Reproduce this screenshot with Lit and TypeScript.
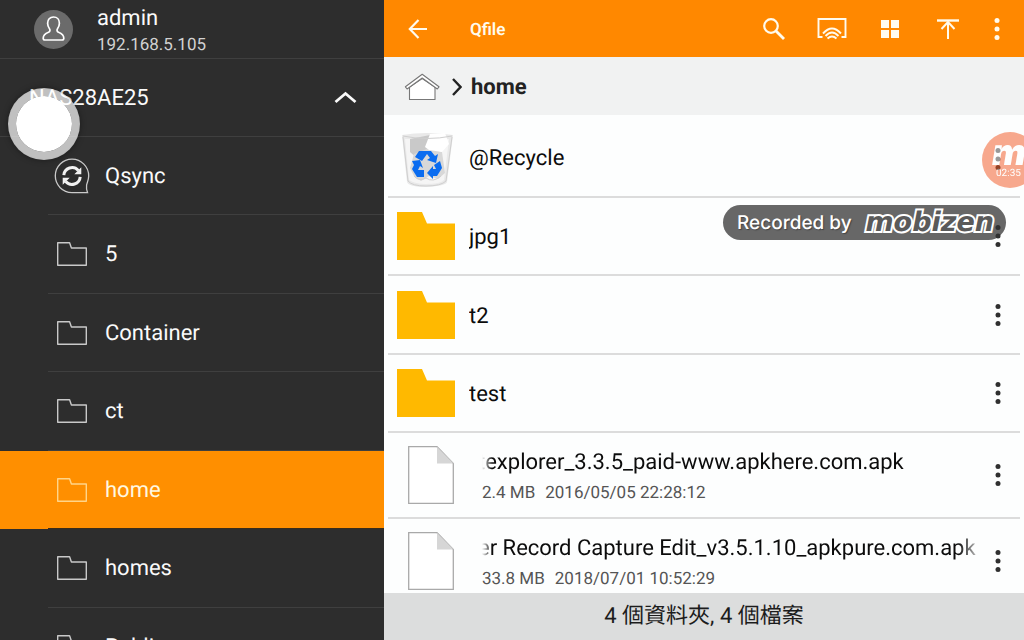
import { LitElement, html, css, svg, nothing } from "lit";
import { customElement, property, state } from "lit/decorators.js";
import { classMap } from "lit/directives/class-map.js";

const outlineFolder = svg`<svg width="36" height="36" viewBox="0 0 36 36" fill="none" stroke="currentColor" stroke-width="1.4" stroke-linejoin="round"><path d="M3.7 6.7H15.6L17.4 12H32.3V29.3H3.7Z"/></svg>`;

const syncIcon = svg`<svg width="36" height="36" viewBox="0 0 36 36" fill="none" stroke="currentColor">
  <path stroke-width="1.3" d="M33.5 34.6H18A16.7 16.7 0 1 1 34.7 18C34.7 22 33 25 32.6 27C32.3 29.5 32.6 32.5 33.5 34.6Z"/>
  <path stroke="#f2f2f2" stroke-width="3" d="M9.8 17.2A8.3 8.3 0 0 1 24.3 12.4M26.2 18.8A8.3 8.3 0 0 1 11.7 23.6"/>
  <path fill="#f2f2f2" stroke="none" d="M27.3 9.2V16.2H20.3ZM8.7 26.8V19.8H15.7Z"/></svg>`;

const kebab = svg`<svg width="6" height="24" viewBox="0 0 6 24" fill="currentColor"><circle cx="3" cy="3.5" r="2.5"/><circle cx="3" cy="12" r="2.5"/><circle cx="3" cy="20.5" r="2.5"/></svg>`;

const folderIcon = svg`<svg width="58" height="48" viewBox="0 0 58 48"><path fill="#ffb900" d="M0 0H25L30 11.5H58V48H0Z"/></svg>`;

const fileIcon = svg`<svg width="46" height="58" viewBox="0 0 46 58"><path fill="#fff" stroke="#a9a9a9" stroke-width="1.3" d="M.7 .7H29L45.3 17.5V57.3H.7Z"/><path fill="#d6d6d6" d="M29 .7L45.5 17.5H29Z"/></svg>`;

const recycleIcon = svg`<svg width="58" height="58" viewBox="0 0 58 58">
  <path fill="#e9e9e9" d="M5 5Q29 1 56 5L50 52Q49 56 29 57Q12 57 10 52Z"/>
  <path fill="#f5f5f5" d="M8 9L12 50Q18 54 29 54Q44 54 47 50L52 9Z"/>
  <path fill="#c9c9c9" d="M13 9L33 5V22L22 30L13 22Z"/>
  <path fill="#d8d8d8" d="M32 18L45 22L48 43L41 49L32 46L24 51L17 46L13 38L17 24Z"/>
  <path fill="#fff" d="M33 4L48 3L52 14L45 22L32 20L28 17Z"/>
  <path fill="none" stroke="#cfcfcf" d="M6 6Q30 11 55 6M6 7L11 51Q15 56 29 56Q44 56 49 51L55 7M17 46Q22 52 29 48Q36 53 44 46"/>
  <g fill="#0a6cf0">
    <path d="M22 21H34L38 26L41 24L39 33L30 30L33 28L30 24L25 31L18 27Z"/>
    <path d="M15 31L23 30L26 38L23 36L21 40L27 40V47H20L15 39L17 35Z"/>
    <path d="M37 35L43 31L45 38L40 46H36V49L30 43L36 36V39H39Z"/>
  </g></svg>`;

@customElement("nas-sidebar")
class NasSidebar extends LitElement {
  @property() selected = "home";
  @state() private open = true;

  private folders = ["Qsync", "5", "Container", "ct", "home", "homes", "Public"];

  static styles = css`
    :host { display: block; overflow: hidden; background: #2d2d2d; color: #fafafa; font-size: 22px; line-height: 26px; }
    svg { display: block; flex: none; }
    .account { display: flex; align-items: center; gap: 24px; height: 58px; padding-left: 34px; border-bottom: 1px solid #3f3f3f; }
    .who { padding-top: 6px; }
    .name { margin: 0; }
    .address { margin: 0; font-size: 17px; color: #d2d2d2; }
    .server { display: flex; align-items: center; justify-content: space-between; width: 100%; height: 78px; padding: 0 27px 0 29px; border: 0; border-bottom: 1px solid #3f3f3f; background: none; color: inherit; font: inherit; }
    .list { list-style: none; margin: 0; padding: 0; }
    .item { display: flex; height: 78px; padding-left: 48px; }
    .item:nth-child(even) { height: 79px; }
    .link { flex: 1; display: flex; align-items: center; gap: 15px; padding-left: 6px; border-bottom: 1px solid #3f3f3f; color: inherit; text-decoration: none; }
    .icon { color: #c9c9c9; }
    .label { padding-top: 2px; }
    .active { background: #ff8f00; color: #fff8e0; }
    .active .icon { color: #ffd58a; }
    .active .link { border-color: #3a2c1a; }
  `;

  render() {
    return html`
      <header class="account">
        <svg width="39" height="39" viewBox="0 0 39 39" fill="none"><circle cx="19.5" cy="19.5" r="19.5" fill="#6b6b6b"/><path stroke="#fff" stroke-width="1.7" stroke-linejoin="round" d="M19.5 7C15.8 7 13.6 9.7 13.6 13.2C13.6 16 14.7 17.5 15.6 18.9C16.2 20 16.2 21.5 14.5 22.3C10.8 23.7 9.2 25.3 9.2 28.3Q9.2 30 11 30H28Q29.8 30 29.8 28.3C29.8 25.3 28.2 23.7 24.5 22.3C22.8 21.5 22.8 20 23.4 18.9C24.3 17.5 25.4 16 25.4 13.2C25.4 9.7 23.2 7 19.5 7Z"/></svg>
        <div class="who"><p class="name">admin</p><p class="address">192.168.5.105</p></div>
      </header>
      <button class="server" aria-expanded=${this.open} @click=${() => (this.open = !this.open)}>
        <span>NAS28AE25</span>
        <svg width="23" height="14" viewBox="0 0 23 14" fill="none" stroke="currentColor" stroke-width="2.8"><path d="M1.5 11L11.5 2.5L21.5 11"/></svg>
      </button>
      ${this.open
        ? html`<nav><ul class="list">
            ${this.folders.map((f) => html`<li class=${classMap({ item: true, active: f === this.selected })}>
              <a class="link" href="#"><span class="icon">${f === "Qsync" ? syncIcon : outlineFolder}</span><span class="label">${f}</span></a>
            </li>`)}
          </ul></nav>`
        : nothing}
    `;
  }
}

interface Entry { kind: "bin" | "folder" | "file"; name: string; size?: string; date?: string; }

@customElement("file-browser")
class FileBrowser extends LitElement {
  private entries: Entry[] = [
    { kind: "bin", name: "@Recycle" },
    { kind: "folder", name: "jpg1" },
    { kind: "folder", name: "t2" },
    { kind: "folder", name: "test" },
    { kind: "file", name: "texplorer_3.3.5_paid-www.apkhere.com.apk", size: "2.4 MB", date: "2016/05/05 22:28:12" },
    { kind: "file", name: "er Record Capture Edit_v3.5.1.10_apkpure.com.apk", size: "33.8 MB", date: "2018/07/01 10:52:29" },
  ];

  static styles = css`
    :host { display: flex; flex-direction: column; min-width: 0; overflow: hidden; background: #fdfefe; color: #0c0c0c; font-size: 22px; line-height: 26px; }
    svg { display: block; flex: none; }
    button { display: flex; align-items: center; justify-content: center; flex: none; padding: 0; border: 0; background: none; color: inherit; }
    .toolbar { display: flex; align-items: center; flex: none; height: 57px; padding: 0 7px 0 5px; background: #ff8800; color: #fffbee; }
    .tool { width: 58px; height: 56px; }
    .overflow { width: 40px; }
    .title { flex: 1; margin: 0 0 0 23px; padding-top: 2px; font-size: 17px; font-weight: 600; }
    .crumbs { display: flex; align-items: center; flex: none; box-sizing: border-box; height: 58px; padding: 2px 0 0 20px; background: #f1f2f2; color: #222; }
    .arrow { margin: 0 9px 0 12px; }
    .here { padding-top: 2px; font-weight: 700; }
    .list { flex: 1; min-height: 0; overflow: hidden; list-style: none; margin: 0; padding: 0 4px; }
    .row { display: flex; align-items: center; gap: 14px; box-sizing: border-box; height: 78px; padding-left: 9px; border-bottom: 2px solid #dcdcdc; }
    .row:nth-child(odd) { height: 79px; }
    .row.bin { height: 83px; padding-top: 7px; }
    .row.folder .text { padding-top: 4px; }
    .row.file { height: 86px; gap: 28px; padding-left: 20px; }
    .text { flex: 1; min-width: 0; }
    .name { margin: 0; white-space: nowrap; overflow: hidden; }
    .file .text { margin-right: -28px; padding-top: 6px; }
    .file .name { text-indent: -4px; margin-bottom: 4px; mask-image: linear-gradient(to right, transparent, #000 10px, #000 calc(100% - 18px), transparent calc(100% + 8px)); }
    .meta { margin: 0; font-size: 17px; color: #555; display: flex; gap: 10px; }
    .more { width: 44px; height: 56px; position: relative; z-index: 2; color: #303030; }
    .status { flex: none; height: 47px; line-height: 47px; text-align: center; background: #dcdddd; color: #1c1c1c; }
  `;

  private icon(kind: string) {
    return kind === "bin" ? recycleIcon : kind === "folder" ? folderIcon : fileIcon;
  }

  render() {
    return html`
      <header class="toolbar">
        <button class="tool" aria-label="Back"><svg width="20" height="20" viewBox="0 0 20 20" fill="none" stroke="currentColor" stroke-width="2.2"><path d="M19 10H2M10.5 1L1.8 10L10.5 19"/></svg></button>
        <h1 class="title">Qfile</h1>
        <button class="tool" aria-label="Search"><svg width="22" height="22" viewBox="0 0 22 22" fill="none" stroke="currentColor"><circle cx="8" cy="8" r="6.8" stroke-width="2.2"/><path stroke-width="2.8" d="M13 13L21 21"/></svg></button>
        <button class="tool" aria-label="Cast"><svg width="30" height="24" viewBox="0 0 30 24" fill="none" stroke="currentColor" stroke-width="1.9"><path d="M5.5 20H1.5V2H28.5V20H24.5"/><path d="M6 16.5Q15 6.5 24 16.5M8.5 19Q15 12 21.5 19M10.5 21.5Q15 17.5 19.5 21.5"/></svg></button>
        <button class="tool" aria-label="Grid view"><svg width="18" height="18" viewBox="0 0 18 18" fill="currentColor"><path d="M0 0H8V8H0ZM10 0H18V8H10ZM0 10H8V18H0ZM10 10H18V18H10Z"/></svg></button>
        <button class="tool" aria-label="Upload"><svg width="22" height="20" viewBox="0 0 22 20" fill="none" stroke="currentColor" stroke-width="2"><path stroke-width="2.4" d="M0 1.5H22"/><path d="M11 20V3M4.5 10L11 3L17.5 10"/></svg></button>
        <button class="tool overflow" aria-label="More options">${kebab}</button>
      </header>
      <nav class="crumbs" aria-label="Path">
        <svg width="36" height="28" viewBox="0 0 36 28" fill="#fff" stroke="#777" stroke-width="1.1" stroke-linejoin="round"><path d="M5.5 14V26.5H31V14L18.2 5.5Z"/><path d="M18.2 1.2L35 13.8L33.3 16L18.2 5L3.1 16L1.4 13.8Z"/></svg>
        <svg class="arrow" width="10" height="18" viewBox="0 0 10 18" fill="none" stroke="#222" stroke-width="2.4"><path d="M1 1L8.5 9L1 17"/></svg>
        <span class="here">home</span>
      </nav>
      <ul class="list">
        ${this.entries.map((e) => html`<li class="row ${e.kind}">
          ${this.icon(e.kind)}
          <div class="text">
            <p class="name">${e.name}</p>
            ${e.size ? html`<p class="meta"><span>${e.size}</span><span>${e.date}</span></p>` : nothing}
          </div>
          <button class="more" aria-label="Actions for ${e.name}">${kebab}</button>
        </li>`)}
      </ul>
      <footer class="status">4 個資料夾, 4 個檔案</footer>
    `;
  }
}

@customElement("app-root")
class AppRoot extends LitElement {
  static styles = css`
    :host { display: grid; grid-template-columns: 3fr 5fr; grid-template-rows: minmax(0, 1fr); height: 100vh; position: relative; overflow: hidden; font-family: Roboto, "Noto Sans CJK TC", sans-serif; text-rendering: geometricPrecision; }
    .touch { position: absolute; left: 8px; top: 88px; width: 56px; height: 56px; border: 8px solid rgba(255, 255, 255, 0.7); border-radius: 50%; background: #fff; background-clip: padding-box; box-shadow: 0 0 6px rgba(0, 0, 0, 0.4); pointer-events: none; }
    .badge { position: absolute; right: 18px; top: 205px; z-index: 1; box-sizing: border-box; width: 283px; height: 35px; padding: 0 12px 0 14px; display: flex; align-items: center; justify-content: space-between; border-radius: 18px; background: #676767; color: #fff; font: 500 19px/34px Inter, sans-serif; text-shadow: 1px 1px 1px #444; white-space: nowrap; }
    .brand { font: italic 700 27px/30px "DejaVu Sans", sans-serif; color: #5a5a5a; -webkit-text-stroke: 4px #fff; paint-order: stroke fill; text-shadow: none; }
    .recorder { position: absolute; right: -14px; top: 132px; z-index: 3; box-sizing: border-box; width: 56px; height: 56px; padding: 7px 0 0 10px; border-radius: 50%; background: #f3551e; color: #fff; opacity: 0.5; }
    .mark { display: block; font: italic 900 36px/26px Inter, sans-serif; }
    .time { display: block; padding: 3px 0 0 4px; font-size: 10px; line-height: 12px; }
  `;

  render() {
    return html`
      <nas-sidebar></nas-sidebar>
      <file-browser></file-browser>
      <div class="touch"></div>
      <div class="badge"><span>Recorded by</span><span class="brand">mobizen</span></div>
      <div class="recorder"><span class="mark">m</span><span class="time">02:35</span></div>
    `;
  }
}
